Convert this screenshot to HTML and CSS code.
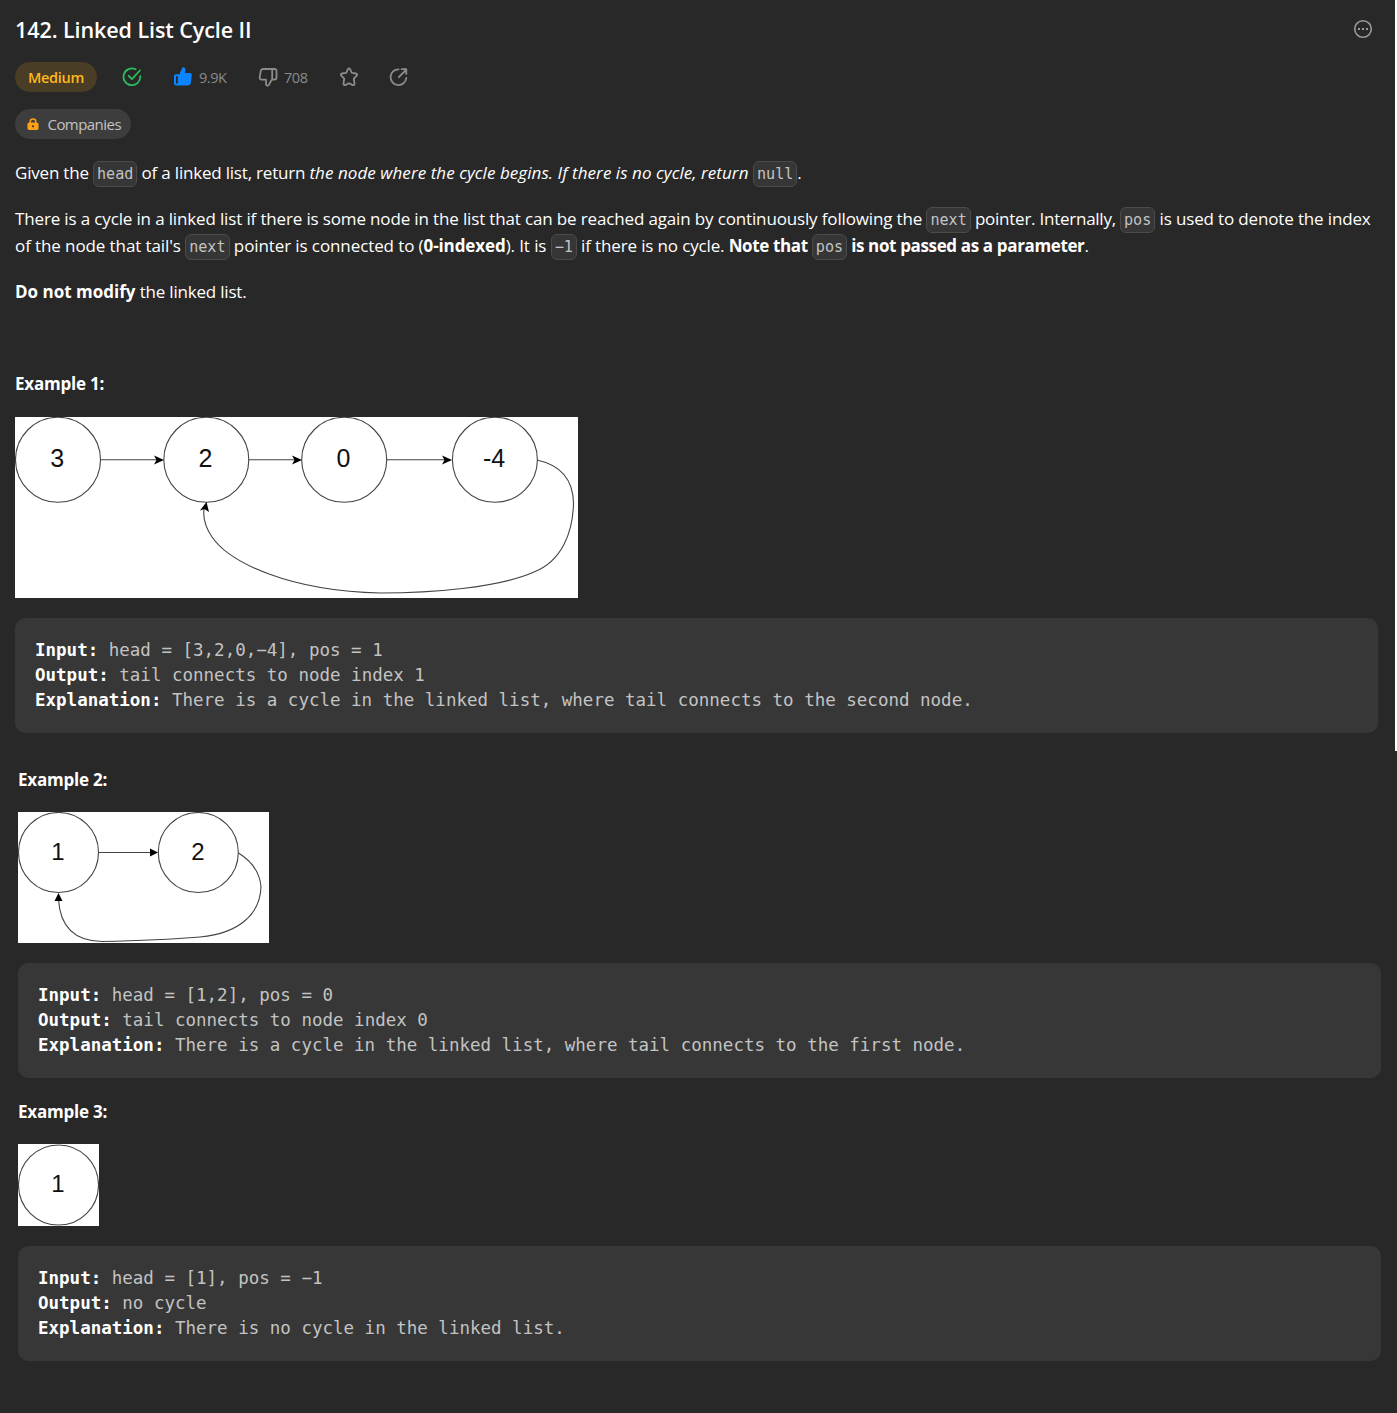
FILE: index.html
```html
<!DOCTYPE html>
<html lang="en">
<head>
<meta charset="utf-8">
<title>142. Linked List Cycle II</title>
<link rel="stylesheet" href="styles.css">
</head>
<body>
<main>
<section class="problem">
  <header class="title-row">
    <h1>142. Linked List Cycle II</h1>
    <svg class="more" width="20" height="20" viewBox="0 0 20 20"><circle cx="10" cy="10" r="8.3" fill="none" stroke="#999" stroke-width="1.6"/><g fill="#999"><rect x="5" y="9" width="2" height="2"/><rect x="9" y="9" width="2" height="2"/><rect x="13" y="9" width="2" height="2"/></g></svg>
  </header>
  <div class="meta">
    <span class="pill medium">Medium</span>
    <svg class="icon solved" viewBox="0 0 20 20"><path d="M13.600 2.200A8.400 8.400 0 1 0 18.300 9.200M6.700 8.800l3.200 3.300 8-8.600"/></svg>
    <span class="stat like"><svg class="icon" viewBox="0 0 20 20"><path fill="#0a84ff" d="M3 7.200h3.400L9 1.300Q9.400 0 10.600 .2C12.400 .5 12.600 2.100 12.300 3.700L11.900 6H16.600Q19 6 18.700 8.400L17.800 16Q17.500 18.400 15 18.400H3Q1 18.400 1 16.400V9.200Q1 7.200 3 7.200Z"/><path d="M3 9.200H4.800v7.200H3z" fill="#282828"/></svg><span>9.9K</span></span>
    <span class="stat dislike"><svg class="icon" viewBox="0 0 20 20"><path d="M14.200 2H5Q3.200 2 2.800 3.800L1.700 10.300Q1.400 12.500 3.600 12.700H8V17.300Q8.300 18.900 9.900 18.700Q10.800 18.500 11.200 17.300L13 13.800Q13.600 12.600 14.600 12.600H16.500Q18.500 12.600 18.500 10.600V4Q18.500 2 16.500 2H14.200V12.700"/></svg><span>708</span></span>
    <svg class="icon star" viewBox="0 0 20 20"><path d="M8.900 2.200Q10 .4 11.100 2.200L12.800 5.800 17.100 6.500Q19 7.100 17.700 8.700L14.800 11.700 15.500 16.400Q15.400 18.800 13.300 17.900L10 16.200 6.700 17.900Q4.600 18.800 4.500 16.400L5.200 11.700 2.300 8.700Q1 7.100 2.900 6.500L7.200 5.800Z"/></svg>
    <svg class="icon share" viewBox="0 0 20 20"><path d="M9.600 2.300A7.900 7.900 0 1 0 17.300 11M9.800 10.200L17 3M12.600 2.200H17.300V6.900"/></svg>
  </div>
  <div class="tags">
    <span class="pill companies"><svg width="12" height="12" viewBox="0 0 12 13"><path d="M3 6V3.800Q3 1 6 1T9 3.800V6" fill="none" stroke="#ffa116" stroke-width="1.600"/><rect y="5" width="12" height="8" rx="1.800" fill="#ffa116"/><rect x="5" y="8" width="2" height="2" fill="#383838"/></svg><span>Companies</span></span>
  </div>
  <div class="text">
    <p><span class="snug">Given the </span><code>head</code><span class="snug"> of a linked list, return </span><em>the node where the cycle begins. If there is no cycle, return </em><code>null</code>.</p>
    <p>There is a cycle in a linked list if there is some node in the list that can be reached again by continuously following the <code>next</code><span class="tight"> pointer. Internally, </span><code>pos</code> is used to denote the index<br><span class="loose">of the node that tail's </span><code>next</code><span class="loose"> pointer is connected to (<strong>0-indexed</strong>). It is </span><code>−1</code> if there is no cycle. <strong class="dense">Note that </strong><code>pos</code><strong class="dense"> is not passed as a parameter</strong>.</p>
    <p><strong class="wide">Do not modify</strong><span class="snug"> the linked list.</span></p>
  </div>
  <div class="example first">
    <h2>Example 1:</h2>
    <svg class="diagram" width="563" height="181" viewBox="0 0 563 181">
      <g class="line"><circle cx="43" cy="42.800" r="42.500"/><circle cx="191.300" cy="42.800" r="42.500"/><circle cx="329.200" cy="42.800" r="42.500"/><circle cx="479.900" cy="42.800" r="42.500"/><path d="M85.500 42.800H144M233.500 42.800H281M371.500 42.800H433M522 43C545 48 558 62 558.500 86C558 115 547 144 519 155C483 171 415 176 365 176C275 174 215 146 197 120C189 108 187 98 190 88"/></g>
      <path d="M149 43l-10-4.500 2.500 4.500-2.500 4.500zM287 43l-10-4.500 2.500 4.500-2.500 4.500zM437 43l-10-4.500 2.500 4.500-2.500 4.500zM191.500 85l-6.500 8.500 4.500-1.500 4.500 3z"/>
      <g class="big"><text x="42.300" y="50">3</text><text x="190.500" y="50">2</text><text x="328.500" y="50">0</text><text x="479" y="50">-4</text></g>
    </svg>
    <pre><b>Input:</b> head = [3,2,0,−4], pos = 1
<b>Output:</b> tail connects to node index 1
<b>Explanation:</b> There is a cycle in the linked list, where tail connects to the second node.</pre>
  </div>
</section>
<section class="more-examples">
  <div class="example">
    <h2>Example 2:</h2>
    <svg class="diagram" width="251" height="131" viewBox="0 0 251 131">
      <g class="line"><circle cx="40.500" cy="40.500" r="40"/><circle cx="180.300" cy="40.500" r="40"/><path d="M81 40.500H135M220.500 41C235 50 242 61 243 75C242 101 223 121 182 125C158 127 110 129 84 129.500C56 129 42 115 40.500 87"/></g>
      <path d="M140 40.500l-8-4v8zM40.500 81l-4 8h8z"/>
      <g class="small"><text x="40" y="47.500">1</text><text x="180" y="47.500">2</text></g>
    </svg>
    <pre><b>Input:</b> head = [1,2], pos = 0
<b>Output:</b> tail connects to node index 0
<b>Explanation:</b> There is a cycle in the linked list, where tail connects to the first node.</pre>
  </div>
  <div class="example">
    <h2>Example 3:</h2>
    <svg class="diagram" width="81" height="82" viewBox="0 0 81 82">
      <g class="line"><circle cx="40.500" cy="41" r="40"/></g>
      <g class="small"><text x="40" y="48">1</text></g>
    </svg>
    <pre><b>Input:</b> head = [1], pos = −1
<b>Output:</b> no cycle
<b>Explanation:</b> There is no cycle in the linked list.</pre>
  </div>
</section>
</main>
</body>
</html>
```
FILE: styles.css
```css
* { box-sizing: border-box; }
body { margin: 0; background: #282828; color: #fff; font-family: "Open Sans", "Noto Sans", sans-serif; font-size: 17px; }
main { min-height: 1413px; }
.problem { height: 751px; padding: 0 17px 0 15px; border-right: 2px solid #fff; }
.title-row { display: flex; justify-content: space-between; height: 62px; }
h1 { margin: 14px 0 0; font-size: 21.5px; line-height: 32px; font-weight: 600; letter-spacing: -0.08px; white-space: nowrap; }
.more { margin: 19px 5px 0 0; }
.meta { display: flex; align-items: center; height: 30px; font-size: 14.5px; color: #8a8a8a; }
.pill { display: inline-flex; align-items: center; height: 30px; border-radius: 15px; white-space: nowrap; }
.medium { width: 82px; justify-content: center; background: #493d25; color: #ffb81c; font-weight: 600; letter-spacing: -0.3px; }
.icon { width: 20px; height: 20px; fill: none; stroke: #8c8c8c; stroke-width: 1.8; stroke-linecap: round; stroke-linejoin: round; flex: none; }
.like .icon { stroke: none; }
.solved { stroke: #2cbb5d; margin-left: 25px; }
.stat { display: flex; align-items: center; gap: 6px; letter-spacing: -0.45px; }
.like { width: 55px; margin-left: 31px; }
.dislike { width: 52px; margin-left: 30px; }
.star { margin-left: 29px; }
.share { margin-left: 30px; }
.tags { margin-top: 17px; height: 30px; font-size: 15px; }
.companies { width: 116px; padding-left: 11.5px; gap: 9px; background: #3d3d3d; color: #c3c3c3; letter-spacing: -0.55px; }
.text { margin-top: 20px; line-height: 27px; letter-spacing: -0.148px; white-space: nowrap; }
.snug { letter-spacing: -0.2px; }
.tight { letter-spacing: -0.25px; }
.loose { letter-spacing: -0.1px; }
.dense { letter-spacing: -0.36px; }
.wide { letter-spacing: 0; }
em { letter-spacing: 0.057px; }
p { margin: 0 0 19px; }
strong { font-weight: 700; }
code { display: inline-block; height: 26px; margin: -3px 0; padding: 0 3px; border: 1px solid #4b4b4b; border-radius: 6px; background: #363636; color: #c3c3c3; font: 15.1px/24px "DejaVu Sans Mono", monospace; letter-spacing: 0; }
.example h2 { margin: 0 0 19px; font-size: 17px; line-height: 27px; font-weight: 700; letter-spacing: -0.22px; }
.first { margin-top: 65px; }
.example.first h2 { margin-bottom: 20px; }
.diagram { display: block; background: #fff; font-family: "Liberation Sans", Arial, sans-serif; }
.line { fill: none; stroke: #444; stroke-width: 1.1; }
.diagram text { text-anchor: middle; fill: #111; }
.big { font-size: 25px; }
.small { font-size: 24px; }
pre { height: 115px; margin: 20px 0; padding: 20px; border-radius: 10px; background: #373737; color: #c3c3c3; font: 17.5px/25px "DejaVu Sans Mono", monospace; }
pre b { color: #fff; }
.more-examples { padding: 15px 16px 0 18px; }
```
